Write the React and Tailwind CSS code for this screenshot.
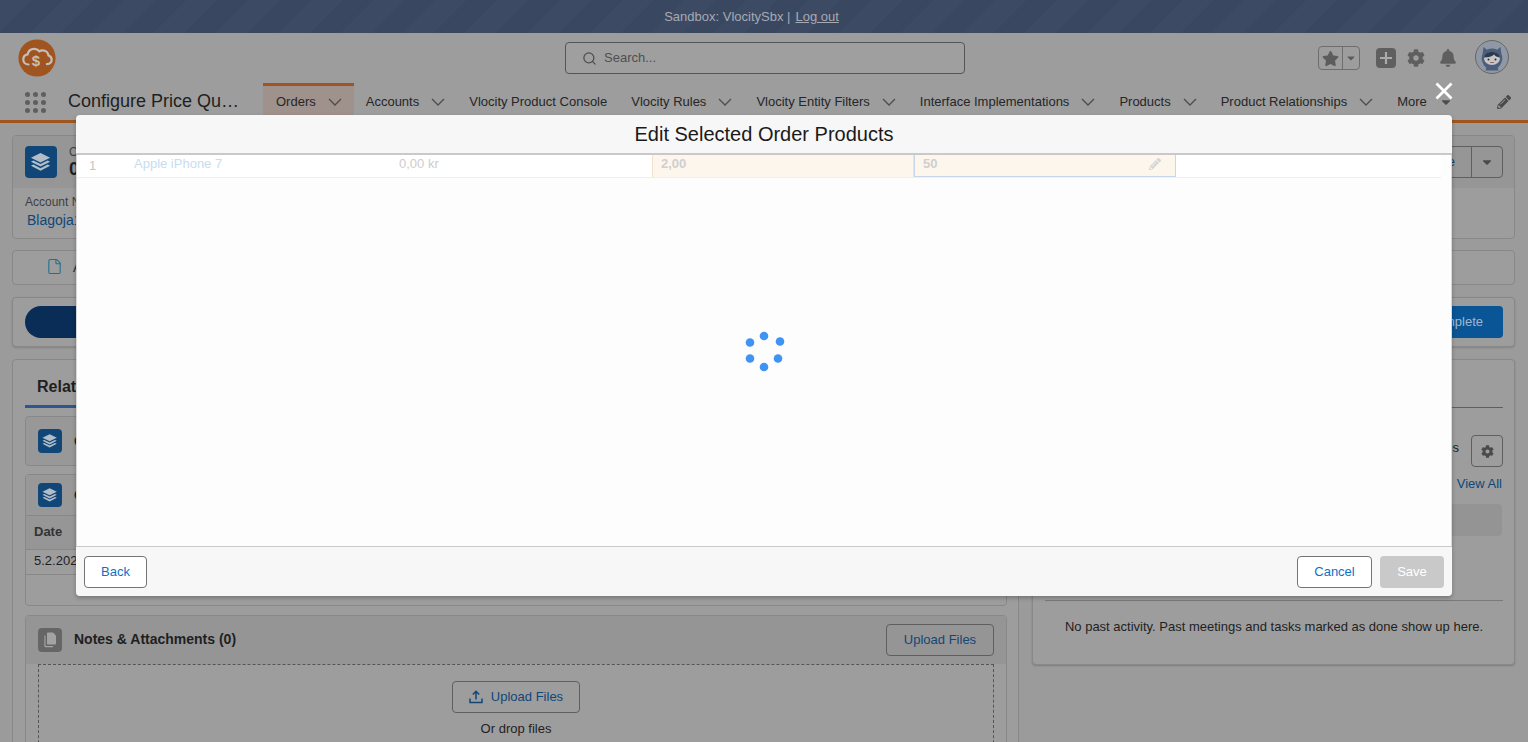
import React from "react";
import { File, Search } from "lucide-react";
import { FaBell, FaCaretDown, FaCog, FaPencilAlt, FaStar } from "react-icons/fa";

function Layers({ size = 24 }) {
  return (
    <div className="flex shrink-0 items-center justify-center rounded-[4px] bg-[#104778]" style={{ width: size, height: size }}>
      <svg viewBox="0 0 24 24" width={size * 0.72} height={size * 0.72} fill="#b3bdc7">
        <path d="M12 3 22 8 12 13 2 8Z" />
        <path d="M4.6 11 2 12.3 12 17.3 22 12.3 19.4 11 12 14.7Z" />
        <path d="M4.6 15.2 2 16.5 12 21.5 22 16.5 19.4 15.2 12 18.9Z" />
      </svg>
    </div>
  );
}

function Chevron() {
  return (
    <svg width="14" height="8" viewBox="0 0 14 8" fill="none" stroke="#4d4d4d" strokeWidth="1.3" className="ml-[12px] shrink-0">
      <path d="M1 1l6 6 6-6" />
    </svg>
  );
}

function NavItem({ label, chevron = true, active = false, caret = false }) {
  return (
    <div className={`flex h-[37px] shrink-0 items-center px-[12px] text-[13px] text-[#262626] ${active ? "bg-[#9f918c] pl-[13px] shadow-[inset_0_3px_0_#a05521]" : ""}`}>
      <span>{label}</span>
      {chevron && <Chevron />}
      {caret && <FaCaretDown className="ml-[12px] text-[#4d4d4d]" size={14} />}
    </div>
  );
}

function Logo() {
  return (
    <svg width="38" height="38" viewBox="0 0 38 38" className="shrink-0">
      <circle cx="19" cy="19" r="18.6" fill="#a05521" />
      <path d="M10.5 25.5c-3.2 0-5.2-2.3-5.2-5.1 0-2.6 1.8-4.6 4.3-5 .7-3.2 3.3-5.5 6.6-5.5 2.1 0 3.900.9 5.100 2.400 1-.6 2-.9 3.200-.9 3.200 0 5.600 2.300 6 5.100 2 .7 3.200 2.200 3.200 4.100 0 2.600-2 4.400-4.800 4.600"
        fill="none" stroke="#c4bfba" strokeWidth="2.2" strokeLinecap="round" />
      <text x="18" y="27" textAnchor="middle" fontSize="15" fontWeight="700" fontFamily="Liberation Sans" fill="#c4bfba">$</text>
    </svg>
  );
}

function Avatar() {
  return (
    <svg width="34" height="34" viewBox="0 0 34 34" className="shrink-0">
      <circle cx="17" cy="17" r="16.5" fill="#8f98a4" stroke="#666" strokeWidth="1" />
      <path d="M8.500 7l3.500 2.700a11 11 0 0 1 10 0L25.500 7l.8 6.500a11.500 11.500 0 0 1-.6 10.500c-1 2-2 3-3 3.500l.8 3H10.500l.8-3c-1-.5-2.200-1.500-3-3.500A11.500 11.500 0 0 1 7.700 13.500Z" fill="#4b5f7c" />
      <ellipse cx="17" cy="18.500" rx="8" ry="6.500" fill="#c6c6c6" />
      <path d="M9 17.500c1-4 4-5.500 8-5.500s7 1.500 8 5.500c-3-.3-5-1.500-6-3-1.500 2-5.500 3-10 3Z" fill="#2c3a4f" />
      <circle cx="13.500" cy="19.500" r="1" fill="#2c2c2c" />
      <circle cx="20.500" cy="19.500" r="1" fill="#2c2c2c" />
      <path d="M15.500 22.500h3" stroke="#8d6a5a" strokeWidth="1" strokeLinecap="round" />
    </svg>
  );
}

function Spinner() {
  const dots = [[34, 6], [50, 11.500], [48, 28.500], [34, 37], [20, 28.500], [20, 12.500]];
  return (
    <svg width="68" height="44" viewBox="0 0 68 44">
      {dots.map(([x, y]) => (
        <circle key={`${x}-${y}`} cx={x} cy={y} r="4.300" fill="#3f93f4" />
      ))}
    </svg>
  );
}

function NotesIcon() {
  return (
    <div className="flex h-[24px] w-[24px] shrink-0 items-center justify-center rounded-[4px] bg-[#666]">
      <svg viewBox="0 0 24 24" width="18" height="18" fill="#a3a3a3">
        <path d="M9 2h7l4 4v11a1 1 0 0 1-1 1H9a1 1 0 0 1-1-1V3a1 1 0 0 1 1-1Z" />
        <path d="M6 6v13a1 1 0 0 0 1 1h9v1.500H6a1.500 1.500 0 0 1-1.500-1.500V6Z" />
      </svg>
    </div>
  );
}

function UploadIcon() {
  return (
    <svg width="14" height="14" viewBox="0 0 14 14" fill="none" stroke="#104778" strokeWidth="1.500" className="shrink-0">
      <path d="M7 9.500V1.500M3.800 4.500 7 1.300l3.200 3.200" />
      <path d="M1 8.500v4h12v-4" />
    </svg>
  );
}

function Modal() {
  return (
    <div className="absolute left-[76px] top-[115px] flex h-[481px] w-[1376px] flex-col rounded-[4px] shadow-[0_2px_4px_rgba(0,0,0,0.25)]">
      <div className="flex h-[40px] shrink-0 items-center justify-center rounded-t-[4px] border-b-2 border-[#c9c9c9] bg-[#f7f7f7] text-[20px] text-[#1a1a1a]">
        Edit Selected Order Products
      </div>
      <div className="relative flex min-h-0 flex-1 flex-col items-center border-x border-[#d8d8d8] bg-[#fdfdfd]">
        <div className="flex h-[23px] w-[1364px] shrink-0 self-start border-b border-[#efefef] bg-white text-[13px] leading-[18px]">
          <div className="w-[57px] shrink-0 pl-[12px] pt-[2px] text-[#c4c4c4]">1</div>
          <div className="w-[265px] shrink-0 text-[#c8dcf0]">Apple iPhone 7</div>
          <div className="w-[253px] shrink-0 text-[#cdcdcd]">0,00 kr</div>
          <div className="w-[262px] shrink-0 border-x border-[#f3e2cb] bg-[#fdf6ec] pl-[8px] font-bold text-[#cfcfcf]">2,00</div>
          <div className="flex w-[262px] shrink-0 items-start justify-between border border-t-0 border-[#c9d5ea] bg-[#fdf6ec] pl-[8px] pr-[14px] font-bold text-[#cfcfcf]">
            <span>50</span>
            <FaPencilAlt className="mt-[3px] text-[#d6d6d6]" size={12} />
          </div>
        </div>
        <div className="mt-[152px]">
          <Spinner />
        </div>
      </div>
      <div className="flex h-[50px] shrink-0 items-center justify-between rounded-b-[4px] border-t border-[#c9c9c9] bg-[#f7f7f7] px-[8px] text-[13px]">
        <button className="h-[32px] w-[63px] rounded-[4px] border border-[#747474] bg-white text-[#0f6fc6]">Back</button>
        <div className="flex gap-[8px]">
          <button className="h-[32px] w-[75px] rounded-[4px] border border-[#747474] bg-white text-[#0f6fc6]">Cancel</button>
          <button className="h-[32px] w-[64px] rounded-[4px] bg-[#c9c9c9] text-white">Save</button>
        </div>
      </div>
    </div>
  );
}

export default function App() {
  return (
    <div className="relative flex h-[742px] w-[1528px] flex-col overflow-hidden bg-[#9b9b9b] font-['Liberation_Sans',Arial,sans-serif] text-[#1f1f1f]">
      <div className="flex h-[33px] shrink-0 items-center justify-center gap-[5px] bg-[repeating-linear-gradient(135deg,#3d4a64_0,#3d4a64_22px,#3a4760_22px,#3a4760_44px)] pr-[25px] text-[13px] text-[#a5aab3]">
        <span>Sandbox: VlocitySbx |</span>
        <span className="underline">Log out</span>
      </div>

      <div className="flex h-[50px] shrink-0 items-center bg-[#9d9d9d] pl-[18px]">
        <Logo />
        <div className="ml-[509px] flex h-[32px] w-[400px] items-center gap-[7px] rounded-[4px] border border-[#555] bg-[#9f9f9f] pl-[16px] text-[13px] text-[#505050]">
          <Search size={15} className="text-[#4d4d4d]" strokeWidth={2} />
          <span>Search...</span>
        </div>
        <div className="ml-[353px] flex h-[24px] w-[42px] items-center rounded-[4px] border border-[#6e6e6e]">
          <div className="flex h-full w-[24px] items-center justify-center border-r border-[#6e6e6e]">
            <FaStar size={17} className="text-[#5c5c5c]" />
          </div>
          <div className="flex flex-1 items-center justify-center">
            <FaCaretDown size={12} className="text-[#5c5c5c]" />
          </div>
        </div>
        <div className="ml-[16px] flex h-[20px] w-[20px] items-center justify-center rounded-[4px] bg-[#5f5f5f]">
          <svg width="14" height="14" viewBox="0 0 14 14" stroke="#ababab" strokeWidth="2.200">
            <path d="M7 1v12M1 7h12" />
          </svg>
        </div>
        <FaCog size={18} className="ml-[11px] text-[#5f5f5f]" />
        <FaBell size={18} className="ml-[14px] text-[#5f5f5f]" />
        <div className="mb-[2px] ml-[18px]">
          <Avatar />
        </div>
      </div>

      <div className="flex h-[40px] shrink-0 border-b-[3px] border-[#a05521] bg-[#9d9d9d]">
        <div className="flex w-[263px] shrink-0 items-center pl-[25px]">
          <div className="grid h-[19px] w-[21px] grid-cols-3 gap-[3px]">
            {[1, 2, 3, 4, 5, 6, 7, 8, 9].map((n) => (
              <span key={n} className="h-[5px] w-[5px] rounded-full bg-[#5f5f5f]" />
            ))}
          </div>
          <span className="ml-[22px] w-[173px] truncate text-[18px] text-[#1f1f1f]">Configure Price Quote</span>
        </div>
        <NavItem label="Orders" active />
        <NavItem label="Accounts" />
        <NavItem label="Vlocity Product Console" chevron={false} />
        <NavItem label="Vlocity Rules" />
        <NavItem label="Vlocity Entity Filters" />
        <NavItem label="Interface Implementations" />
        <NavItem label="Products" />
        <NavItem label="Product Relationships" />
        <NavItem label="More" chevron={false} caret />
        <div className="ml-auto flex items-center pr-[17px]">
          <FaPencilAlt size={14} className="text-[#4a4a4a]" />
        </div>
      </div>

      <div className="flex flex-1 flex-col pl-[12px] pr-[13px] pt-[12px]">
        <div className="h-[104px] shrink-0 overflow-hidden rounded-[4px] border border-[#888] bg-[#9d9d9d]">
          <div className="flex h-[52px] items-center justify-between bg-[#969696] pl-[12px] pr-[11px]">
            <div className="flex items-center gap-[12px]">
              <Layers size={32} />
              <div>
                <div className="text-[12px] leading-[14px] text-[#3f3f3f]">Order</div>
                <div className="text-[18px] font-bold leading-[20px]">00000123</div>
              </div>
            </div>
            <div className="flex h-[32px] items-center rounded-[4px] border border-[#5f5f5f] text-[13px] text-[#104778]">
              <span className="px-[16px]">Clone</span>
              <div className="flex h-full w-[31px] items-center justify-center border-l border-[#5f5f5f]">
                <FaCaretDown size={14} className="text-[#4a4a4a]" />
              </div>
            </div>
          </div>
          <div className="pl-[12px] pt-[7px]">
            <div className="text-[12px] leading-[14px] text-[#3f3f3f]">Account Name</div>
            <div className="pl-[2px] pt-[2px] text-[14px] leading-[18px] text-[#104778]">Blagoja1</div>
          </div>
        </div>

        <div className="mt-[11px] flex h-[35px] shrink-0 items-center rounded-[4px] border border-[#888] bg-[#9d9d9d] pl-[33px] text-[13px]">
          <File size={17} className="mb-[2px] text-[#1c7090]" strokeWidth={1.500} />
          <span className="ml-[10px]">Attachments</span>
        </div>

        <div className="mt-[12px] flex h-[50px] shrink-0 items-center justify-between rounded-[4px] border border-[#888] bg-[#9d9d9d] pl-[12px] pr-[11px] shadow-[0_1px_2px_rgba(0,0,0,0.15)]">
          <div className="h-[32px] w-[1000px] rounded-full bg-[#092d57]" />
          <div className="flex h-[32px] items-center rounded-[4px] bg-[#0a5595] px-[20px] text-[13px] text-[#a0b8cf]">Mark as Complete</div>
        </div>

        <div className="mt-[12px] flex gap-[13px]">
          <div className="flex h-[400px] w-[1007px] shrink-0 flex-col rounded-[4px] border border-[#888] bg-[#9d9d9d] pl-[12px] pr-[11px]">
            <div className="h-[48px] shrink-0 border-b-[3px] border-[#2b5790]">
              <div className="pl-[12px] pt-[17px] text-[16px] font-bold leading-[20px]">Related</div>
            </div>
            <div className="mt-[8px] flex h-[50px] shrink-0 items-center gap-[12px] rounded-[4px] border border-[#888] bg-[#989898] pl-[12px] text-[14px] font-bold">
              <Layers size={24} />
              <span>Orders (0)</span>
            </div>
            <div className="mt-[8px] flex h-[132px] shrink-0 flex-col rounded-[4px] border border-[#888]">
              <div className="flex h-[40px] shrink-0 items-center gap-[12px] bg-[#989898] pl-[12px] text-[14px] font-bold">
                <Layers size={24} />
                <span>Orders (1)</span>
              </div>
              <div className="flex h-[35px] shrink-0 items-center border-y border-[#888] bg-[#969696] pb-[2px] pl-[8px] text-[13px] font-bold text-[#333]">Date</div>
              <div className="flex h-[25px] shrink-0 items-center border-b border-[#888] pb-[2px] pl-[8px] text-[13px]">5.2.2020</div>
            </div>
            <div className="mt-[9px] flex h-[200px] shrink-0 flex-col rounded-t-[4px] border border-[#888]">
              <div className="flex h-[48px] shrink-0 items-center justify-between bg-[#959595] px-[12px]">
                <div className="flex items-center gap-[12px]">
                  <NotesIcon />
                  <span className="mb-[1px] text-[14px] font-bold">Notes &amp; Attachments (0)</span>
                </div>
                <div className="flex h-[32px] w-[108px] items-center justify-center rounded-[4px] border border-[#5f5f5f] text-[13px] text-[#104778]">Upload Files</div>
              </div>
              <div className="mx-[12px] flex h-[120px] shrink-0 flex-col items-center border border-dashed border-[#555] pt-[16px]">
                <div className="flex h-[32px] w-[128px] items-center justify-center gap-[8px] rounded-[4px] border border-[#5f5f5f] text-[13px] text-[#104778]">
                  <UploadIcon />
                  <span>Upload Files</span>
                </div>
                <span className="mt-[6px] text-[13px]">Or drop files</span>
              </div>
            </div>
          </div>

          <div className="flex h-[306px] w-[483px] shrink-0 flex-col rounded-[4px] border border-[#888] bg-[#9d9d9d] pl-[12px] pr-[11px] shadow-[0_1px_2px_rgba(0,0,0,0.2)]">
            <div className="h-[48px] shrink-0 border-b border-[#5f5f5f]" />
            <div className="mt-[27px] flex h-[32px] shrink-0 justify-end gap-[12px] text-[13px]">
              <span className="pt-[3px]">Filters: All time • All activities • All types</span>
              <div className="flex h-[32px] w-[32px] items-center justify-center rounded-[4px] border border-[#5f5f5f]">
                <FaCog size={13} className="text-[#4a4a4a]" />
              </div>
            </div>
            <div className="mt-[7px] h-[17px] shrink-0 pr-[1px] text-right text-[13px] text-[#104778]">View All</div>
            <div className="mr-[1px] mt-[13px] h-[32px] shrink-0 rounded-[4px] bg-[#949494]" />
            <div className="mt-[64px] shrink-0 border-t border-[#7a7a7a] pt-[17px] text-center text-[13px] leading-[18px]">
              No past activity. Past meetings and tasks marked as done show up here.
            </div>
          </div>
        </div>
      </div>

      <svg width="18" height="18" viewBox="0 0 18 18" stroke="white" strokeWidth="2.800" className="absolute left-[1435px] top-[82px]">
        <path d="M1.500 1.500l15 15M16.500 1.500l-15 15" />
      </svg>
      <Modal />
    </div>
  );
}
